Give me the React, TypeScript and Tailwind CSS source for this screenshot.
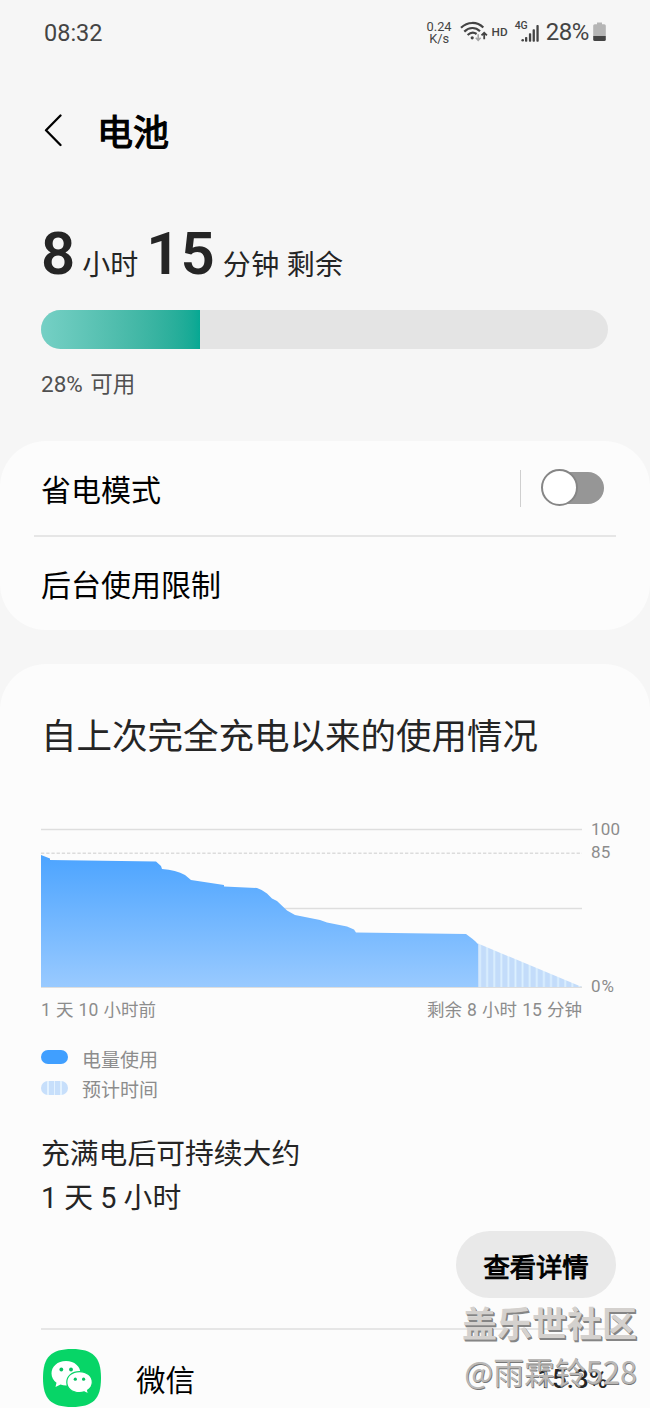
// Battery settings screen, static.

// Battery level over time, in chart units (x: 0-541, y: 0-158 where 0 is 100%).
const USAGE_PATH =
  "M0 26 L9 29.5 L9 31 L115 32.5 L120 37 L121 40 Q135 41 144 46 L150 51 L183 56 L183 57.5 L216 59 Q222 61 226 64.5 L231 69.5 L236 72 L246 81.5 L254 86 L279 91 L286 93.5 L306 97.5 L313 100.5 L315 103.5 L425 105 L431 109.5 L434 112 L437 115 L437 158 L0 158 Z";

function WifiIcon() {
  return (
    <svg width="28" height="22" viewBox="0 0 28 22" fill="none" stroke="#444" strokeWidth="2.2">
      <path d="M1 6.8C7.5 0.4 17.2 0.4 23.3 6.6" />
      <path d="M4.3 10.6C9.2 5.9 15.4 5.9 20 10.2" />
      <path d="M7.6 14C10.8 11.2 14 11.2 16.6 13" />
      <circle cx="12.2" cy="16.8" r="1.6" fill="#444" stroke="none" />
      <path d="M18.2 13.2V19M15.8 16.8L18.2 19.3L20.6 16.8" stroke="#a5a5a5" strokeWidth="1.6" />
      <path d="M24.2 18.2V12M21.5 14.4L24.2 11.7L26.9 14.4" strokeWidth="1.8" />
    </svg>
  );
}

function SignalIcon() {
  return (
    <svg width="18" height="18" viewBox="0 0 18 18" fill="#444">
      <circle cx="1.7" cy="16.3" r="1.3" />
      <rect x="4" y="13" width="2.3" height="4.7" rx="0.8" />
      <rect x="7.9" y="9.3" width="2.3" height="8.4" rx="0.8" />
      <rect x="11.6" y="5.3" width="2.3" height="12.4" rx="0.8" />
      <rect x="15.4" y="1" width="2.3" height="16.7" rx="0.8" />
    </svg>
  );
}

function BatteryIcon() {
  return (
    <svg width="13" height="20" viewBox="0 0 13 20">
      <path d="M4 0.5H9V2.3H11.3Q12.8 2.3 12.8 3.8V14H0.2V3.8Q0.2 2.3 1.7 2.3H4Z" fill="#b5b5b5" />
      <path d="M0.2 14H12.8V17.5Q12.8 19 11.3 19H1.7Q0.2 19 0.2 17.5Z" fill="#444" />
    </svg>
  );
}

function StatusBar() {
  return (
    <div className="flex h-16 items-center justify-between pl-[44px] pr-[44px] text-[#444]">
      <span className="pt-px text-[23.5px] leading-6">08:32</span>
      <div className="flex items-center">
        <div className="mr-[8px] flex flex-col pt-px text-center text-[12.8px] leading-[12px]">
          <span>0.24</span>
          <span>K/s</span>
        </div>
        <WifiIcon />
        <span className="ml-[4px] text-[11.8px] font-medium leading-4">HD</span>
        <div className="relative ml-[13px] mt-[2px] flex">
          <SignalIcon />
          <span className="absolute -left-[6px] -top-[4px] text-[10.5px] font-medium leading-3">4G</span>
        </div>
        <span className="ml-[7px] text-[24px] leading-6 tracking-[-0.4px]">28%</span>
        <span className="ml-[4px]">
          <BatteryIcon />
        </span>
      </div>
    </div>
  );
}

function Header() {
  return (
    <header className="flex h-[134px] items-center pl-[44px]">
      <svg width="20" height="34" viewBox="0 0 20 34" fill="none" stroke="#000" strokeWidth="2.3" strokeLinecap="round" strokeLinejoin="round">
        <path d="M16.5 1.5L2 16.3L16.5 31" />
      </svg>
      <h1 className="ml-[33px] pt-[6px] text-[36px] leading-[40px] text-black [-webkit-text-stroke:1.2px_black]">电池</h1>
    </header>
  );
}

function Summary() {
  return (
    <section className="flex h-[243px] flex-col px-[41px] pt-[24px] text-[#252525]">
      <div className="flex h-[72px] items-baseline whitespace-nowrap text-[28px] leading-[64px]">
        <span className="text-[60px] font-semibold">8</span>
        <span className="relative top-px ml-[7px]">小时</span>
        <span className="ml-[8px] text-[60px] font-semibold">15</span>
        <span className="relative top-px ml-[8px] tracking-[0.3px]">分钟 剩余</span>
      </div>
      <div className="mt-4 h-[39px] w-[567px] overflow-hidden rounded-full bg-[#e4e4e4]">
        <div className="h-full w-[28%] bg-linear-to-r from-[#75d0c5] to-[#05a893]" />
      </div>
      <p className="mt-[20px] text-[22.5px] leading-[30px] text-[#505050] [word-spacing:2px]">28% 可用</p>
    </section>
  );
}

function ModeCard() {
  return (
    <section className="h-[189px] rounded-[46px] bg-[#fcfcfc] px-[34px] text-[30px] text-black">
      <div className="flex h-[96px] items-center border-b-2 border-[#e6e6e6] pl-[7px] pr-[12px]">
        <span className="flex-1 pt-[5px] leading-[40px]">省电模式</span>
        <span className="h-[37px] w-px bg-[#cfcfcf]" />
        <div className="mb-px ml-5 flex h-[37px] w-[63px] items-center">
          <span className="z-10 -mr-[37px] size-[37px] shrink-0 rounded-full border-2 border-[#868686] bg-white" />
          <span className="ml-[10px] h-[32px] flex-1 rounded-full bg-[#969696]" />
        </div>
      </div>
      <div className="flex h-[93px] items-center pl-[7px]">
        <span className="pt-[5px] leading-[40px]">后台使用限制</span>
      </div>
    </section>
  );
}

function UsageChart() {
  return (
    <div className="mt-[48px] flex h-[182px]">
      <div className="w-[541px]">
        <svg className="mt-[20px] block overflow-visible" width="541" height="160" viewBox="0 0 541 160">
          <defs>
            <linearGradient id="usage" x1="0" y1="0" x2="0" y2="1">
              <stop offset="0" stopColor="#4ca4ff" />
              <stop offset="1" stopColor="#99caff" />
            </linearGradient>
            <pattern id="estimate" x="438.6" width="7.1" height="10" patternUnits="userSpaceOnUse">
              <rect width="7.1" height="10" fill="#dcf0ff" />
              <rect x="1.3" width="5.3" height="10" fill="#c3dcfa" />
            </pattern>
          </defs>
          <path d="M0 0.5H541M0 79.5H541M0 158.2H541" stroke="#dedede" strokeWidth="1.5" />
          <path d="M0 24.2H541" stroke="#dcdcdc" strokeWidth="1.5" strokeDasharray="3.3 1.9" />
          <path d="M437 114.5L541 158H437Z" fill="url(#estimate)" />
          <path d={USAGE_PATH} fill="url(#usage)" />
        </svg>
      </div>
      <div className="flex flex-col pl-[9px] pt-[10px] text-[17px] leading-5 tracking-[0.2px] text-[#8c8c8c]">
        <span>100</span>
        <span className="mt-[3px]">85</span>
        <span className="mt-[114px] tracking-[1px]">0%</span>
      </div>
    </div>
  );
}

function Legend() {
  return (
    <div className="mt-[24px] flex flex-col text-[19px] leading-[30px] text-[#8c8c8c]">
      <div className="flex items-center gap-[14px]">
        <span className="mb-[8px] h-[14px] w-[27px] rounded-full bg-[#409fff]" />
        电量使用
      </div>
      <div className="flex items-center gap-[14px]">
        <span className="mb-[6px] flex h-[14px] w-[27px] justify-center gap-[5px] overflow-hidden rounded-full bg-[#c7dffb]">
          <i className="w-[1.5px] bg-[#e3f2ff]" />
          <i className="w-[1.5px] bg-[#e3f2ff]" />
          <i className="w-[1.5px] bg-[#e3f2ff]" />
        </span>
        预计时间
      </div>
    </div>
  );
}

function WechatIcon() {
  return (
    <svg width="58" height="58" viewBox="0 0 58 58">
      <path d="M29 0C50 0 58 8 58 29S50 58 29 58S0 50 0 29S8 0 29 0Z" fill="#07d567" />
      <path d="M23 12C14.5 12 8.5 17.5 8.5 24.5C8.5 28.5 10.5 31.5 13.5 33.7L12.5 38L17.5 35.5C19.3 36.1 21 36.4 23 36.4C31.5 36.4 37.5 31 37.5 24.5C37.5 17.5 31.5 12 23 12Z" fill="#fff" />
      <path d="M36.5 22.6C29 22.6 23.8 27.2 23.8 33.2C23.8 39.2 29 43.6 36.5 43.6C38.2 43.6 39.8 43.3 41.2 42.8L45.5 45L44.6 41.2C47.5 39.3 49.3 36.5 49.3 33.2C49.3 27.2 44 22.6 36.5 22.6Z" fill="#fff" stroke="#07d567" strokeWidth="1.2" />
      <g fill="#07c160">
        <circle cx="18.3" cy="20.5" r="1.9" />
        <circle cx="28" cy="20.5" r="1.9" />
        <circle cx="32.3" cy="30.2" r="1.6" />
        <circle cx="40.6" cy="30.2" r="1.6" />
      </g>
    </svg>
  );
}

function UsageCard() {
  return (
    <section className="mt-[34px] h-[744px] rounded-t-[46px] bg-[#fcfcfc] pl-[41px] pr-[34px] pt-[49px]">
      <h2 className="text-[35.5px] leading-[48px] text-[#252525]">自上次完全充电以来的使用情况</h2>
      <UsageChart />
      <div className="mt-[7px] flex w-[541px] justify-between text-[17.5px] leading-[24px] text-[#8c8c8c] [word-spacing:0.8px]">
        <span>1 天 10 小时前</span>
        <span>剩余 8 小时 15 分钟</span>
      </div>
      <Legend />
      <p className="mt-[26px] text-[28.8px] leading-[44px] text-[#252525]">
        充满电后可持续大约
        <br />1 天 5 小时
      </p>
      <button className="ml-auto mt-[11px] block h-[67px] w-[160px] rounded-full bg-[#e9e9e9] pt-[6px] text-[26.3px] leading-[40px] text-black [-webkit-text-stroke:1px_black]">
        查看详情
      </button>
      <div className="mt-[30px] flex items-center border-t-2 border-[#e6e6e6] pl-[2px] pr-[8px] pt-[19px]">
        <WechatIcon />
        <span className="ml-[35px] flex-1 pt-[6px] text-[29.5px] leading-[40px] text-black">微信</span>
        <span className="pt-[2px] text-[26px] font-medium leading-[40px] text-[#252525]">15.3%</span>
      </div>
    </section>
  );
}

// Community watermark laid over the bottom-right corner.
function Watermark() {
  return (
    <div className="pointer-events-none absolute right-[13px] top-[1305px] whitespace-nowrap text-right">
      <p className="text-[35px] font-bold leading-[42px] text-[#d4d1ce] [text-shadow:1px_1px_0_#858585,1.5px_1.5px_0_#858585]">盖乐世社区</p>
      <p className="font-['Noto_Sans_CJK_SC',sans-serif] text-[30.8px] leading-[48px] text-[#bab8b6] [text-shadow:0.7px_0.7px_0_#777]">@雨霖铃528</p>
    </div>
  );
}

export default function App() {
  return (
    <main className="relative h-[1408px] w-[650px] overflow-hidden bg-[#f6f6f6] font-[Roboto,'Noto_Sans_CJK_SC',sans-serif]">
      <StatusBar />
      <Header />
      <Summary />
      <ModeCard />
      <UsageCard />
      <Watermark />
    </main>
  );
}
